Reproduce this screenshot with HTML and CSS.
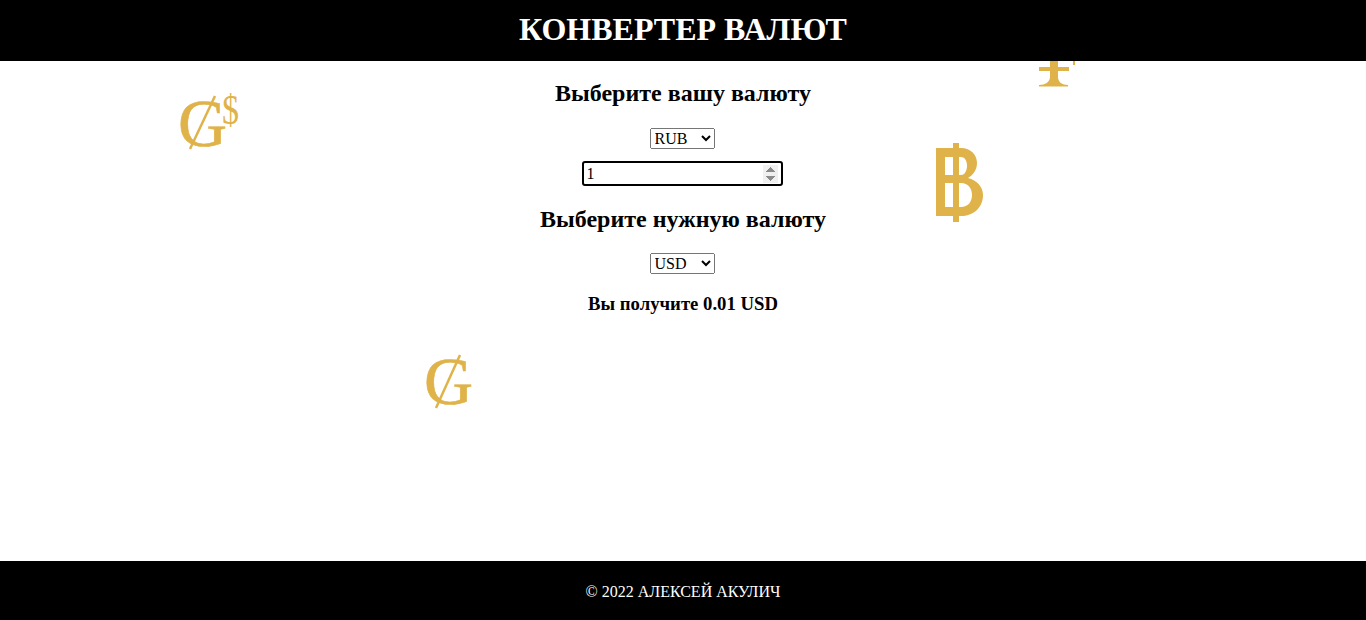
FILE: index.html
```html
<!DOCTYPE html>
<html lang="en">
<head>
    <meta charset="UTF-8">
    <meta name="viewport" content="width=device-width, initial-scale=1.0">
    <title>Конвертер валют</title>
    <link rel="stylesheet" href="styles.css">
</head>
<body>
    <header class="top">
        <h1>КОНВЕРТЕР ВАЛЮТ</h1>
    </header>

    <main class="converter">
        <!-- Falling currency signs -->
        <svg class="coin coin-gs" width="70" height="70" viewBox="0 0 70 70">
            <text class="coin-text" x="0" y="56" font-size="68">G</text>
            <text class="coin-small" x="44" y="34" font-size="42" textLength="17" lengthAdjust="spacingAndGlyphs">$</text>
            <line class="coin-line" x1="12" y1="59" x2="37" y2="6"></line>
        </svg>
        <svg class="coin coin-g" width="60" height="64" viewBox="0 0 60 64">
            <text class="coin-text" x="0" y="56" font-size="68">G</text>
            <line class="coin-line" x1="12" y1="60" x2="36" y2="7"></line>
        </svg>
        <svg class="coin coin-baht" width="48" height="79" viewBox="0 0 48 79">
            <path class="coin-fill" fill-rule="evenodd" d="M0 5H17V0H23V5H25C35 5 41 12 41 20C41 27 37 32 32 35C41 37 47 44 47 52C47 65 37 73 25 73H23V79H17V73H0ZM9 14V32H17V14ZM23 14V32H25C29 32 31 27 31 23C31 18 29 14 25 14ZM9 40V64H17V40ZM23 40V64H25C32 64 36 59 36 52C36 45 32 40 25 40Z"></path>
        </svg>
        <svg class="coin coin-lira" width="40" height="30" viewBox="0 0 40 30">
            <path class="coin-fill" d="M11 0H19V7H30V11H19V17C19 22 23 25 29 25V26.5H0V25C6 25 11 22 11 17V11H0V7H11ZM34 1H36V5H34Z"></path>
        </svg>

        <h2>Выберите вашу валюту</h2>
        <select class="currency">
            <option>RUB</option>
            <option>USD</option>
            <option>EUR</option>
        </select>
        <input class="amount" type="number" value="1" autofocus>

        <h2>Выберите нужную валюту</h2>
        <select class="currency">
            <option>USD</option>
            <option>RUB</option>
            <option>EUR</option>
        </select>
        <h3>Вы получите 0.01 USD</h3>
    </main>

    <footer class="bottom">
        <p>© 2022 АЛЕКСЕЙ АКУЛИЧ</p>
    </footer>
</body>
</html>
```

FILE: styles.css
```css
/* Global Body Styles */
body {
    font-family: 'Liberation Serif', 'Times New Roman', serif;
    margin: 0;
    min-height: 100vh;
    display: flex;
    flex-direction: column;
    background: white;
    color: black;
}

/* Header and footer bars */
.top {
    position: relative;
    z-index: 1;
    background: black;
    color: white;
    text-align: center;
    padding: 11px 12px 13px;
}

.top h1 {
    margin: 0;
    font-size: 32px;
}

.bottom {
    box-sizing: border-box;
    background: black;
    color: white;
    text-align: center;
    height: 59px;
    padding-top: 2px;
    display: flex;
    align-items: center;
    justify-content: center;
}

.bottom p {
    margin: 0;
    font-size: 16px;
}

/* Main converter column */
.converter {
    position: relative;
    flex: 1;
    display: flex;
    flex-direction: column;
    align-items: center;
}

.converter h2 {
    font-size: 24px;
    margin: 19px 0 21px;
}

.converter h3 {
    font-size: 18.72px;
    margin: 19px 0;
}

.currency {
    font-family: inherit;
    font-size: 16px;
    width: 65px;
    height: 21px;
    margin-right: 2px;
}

.amount {
    font-family: inherit;
    font-size: 16px;
    box-sizing: border-box;
    width: 201px;
    height: 25px;
    margin: 12px 2px 1px 0;
    padding: 1px 3px;
    border: 2px solid black;
    border-radius: 3px;
    outline: none;
}

.amount + h2 {
    margin-bottom: 20px;
}

.amount::-webkit-inner-spin-button {
    opacity: 1;
    filter: contrast(1.8) brightness(0.94);
}

/* Currency signs scattered over the page */
.coin {
    position: absolute;
    overflow: visible;
}

.coin-text {
    font-family: 'Liberation Serif', serif;
    fill: #dfb34a;
    stroke: #dfb34a;
    stroke-width: 0.6;
}

.coin-small {
    font-family: 'Liberation Serif', serif;
    fill: #dfb34a;
}

.coin-fill {
    fill: #dfb34a;
}

.coin-line {
    stroke: #dfb34a;
    stroke-width: 2.5;
}

.coin-gs {
    left: 178px;
    top: 29px;
}

.coin-g {
    left: 424px;
    top: 287px;
}

.coin-baht {
    left: 936px;
    top: 82px;
}

.coin-lira {
    left: 1039px;
    top: -1px;
}
```
